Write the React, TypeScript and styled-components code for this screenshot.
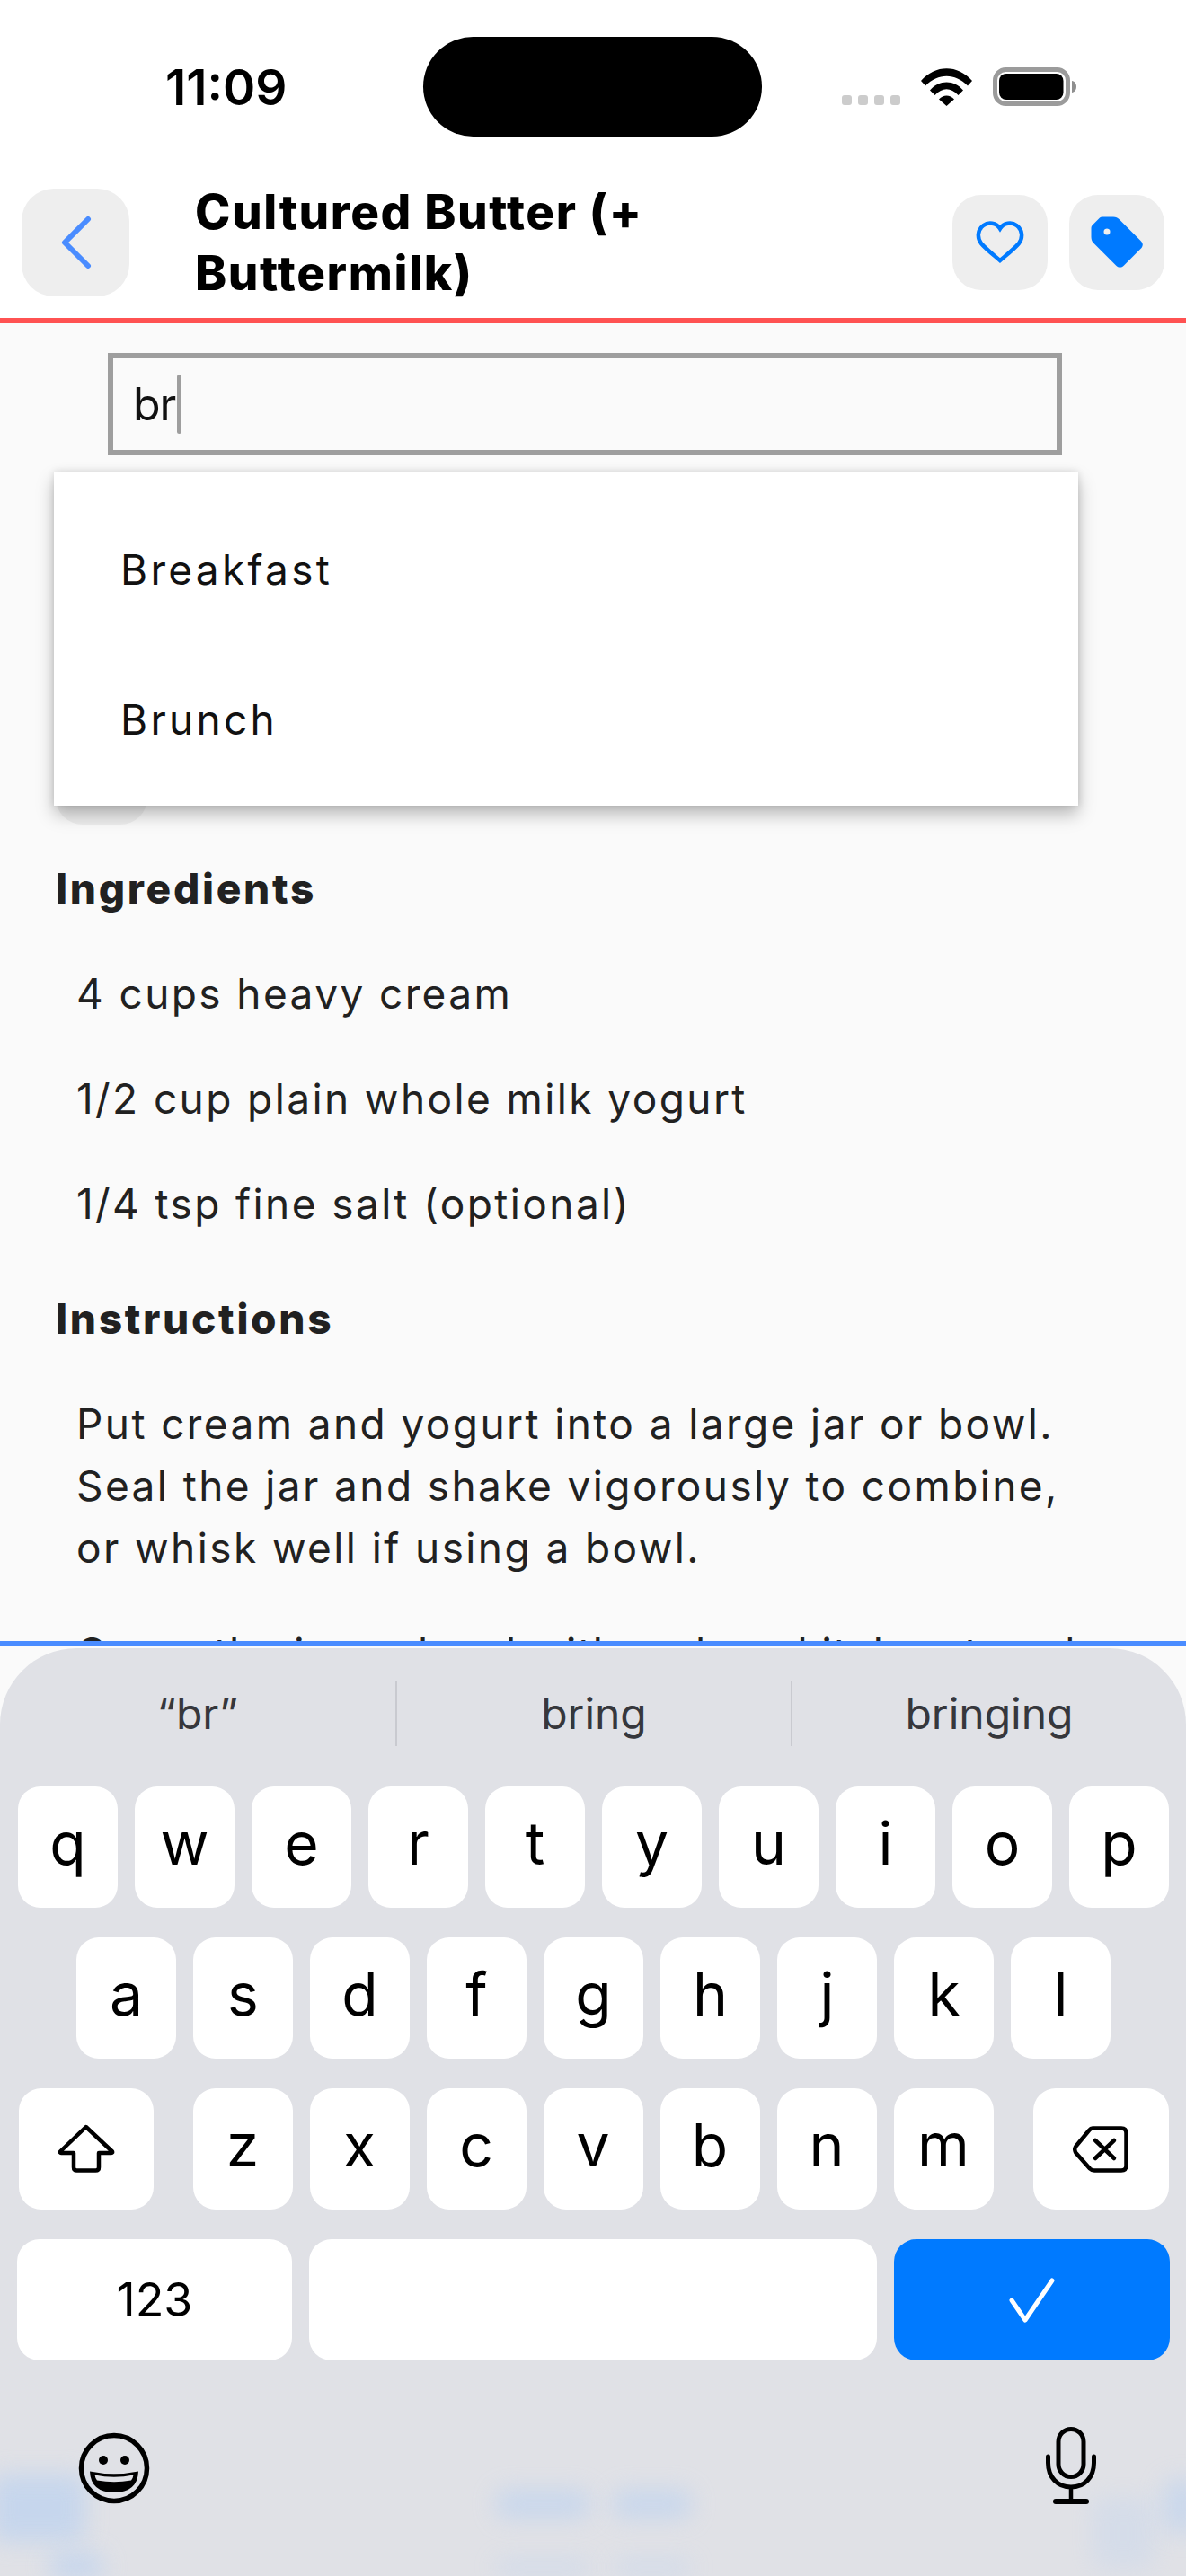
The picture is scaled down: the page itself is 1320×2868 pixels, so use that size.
import React from "react";
import styled, { createGlobalStyle } from "styled-components";

const GlobalStyle = createGlobalStyle`
  html, body {
    margin: 0;
    padding: 0;
    background: #fff;
  }
  * {
    box-sizing: border-box;
  }
`;

const Page = styled.div`
  width: 1320px;
  height: 2868px;
  display: flex;
  flex-direction: column;
  overflow: hidden;
  background: #fff;
  font-family: Inter, "Noto Sans", sans-serif;
`;

const StatusBar = styled.div`
  height: 186px;
  padding-top: 41px;
  display: grid;
  grid-template-columns: 471px 377px 1fr;
`;

const Time = styled.div`
  height: 111px;
  padding-left: 184px;
  display: flex;
  align-items: center;
  font-size: 55px;
  font-weight: 600;
  color: #000;
`;

const Island = styled.div`
  height: 111px;
  border-radius: 56px;
  background: #000;
`;

const StatusIcons = styled.div`
  height: 77px;
  padding-left: 89px;
  display: flex;
  align-items: flex-end;
  gap: 23px;
`;

const SignalDots = styled.div`
  display: flex;
  gap: 7px;
  padding-bottom: 1px;
`;

const SignalDot = styled.span`
  width: 11px;
  height: 11px;
  border-radius: 3px;
  background: #cccccc;
`;

const Header = styled.header`
  height: 174px;
  padding: 0 24px;
  display: flex;
  align-items: center;
  border-bottom: 6px solid #ff5252;
`;

const IconButton = styled.button<{ $size: number }>`
  width: ${(p) => p.$size}px;
  height: ${(p) => p.$size}px;
  flex: none;
  padding: 0;
  border: 0;
  border-radius: ${(p) => Math.round(p.$size * 0.3)}px;
  background: #eeeeee;
  display: flex;
  align-items: center;
  justify-content: center;
`;

const Title = styled.h1`
  flex: 1;
  margin: 0 0 0 73px;
  max-width: 560px;
  font-size: 53px;
  line-height: 68px;
  font-weight: 800;
  letter-spacing: 1.6px;
  color: #000;
`;

const HeaderActions = styled.div`
  margin-left: auto;
  display: flex;
  gap: 24px;
`;

const Content = styled.main`
  position: relative;
  flex: 1;
  min-height: 0;
  overflow: hidden;
  padding: 33px 62px 0;
  background: #fafafa;
  color: #212121;
  font-size: 46px;
  line-height: 69px;
  letter-spacing: 2.4px;
`;

const SearchField = styled.div`
  width: 1062px;
  height: 114px;
  margin-left: 58px;
  padding-left: 22px;
  display: flex;
  align-items: center;
  border: 6px solid #9e9e9e;
  font-size: 50px;
  letter-spacing: -1px;
  color: #111;
`;

const Caret = styled.span`
  width: 5px;
  height: 66px;
  margin-left: 2px;
  border-radius: 3px;
  background: #9e9e9e;
`;

const Chip = styled.div`
  width: 102px;
  height: 106px;
  margin-top: 305px;
  border-radius: 30px;
  background: #eeeeee;
`;

const SectionTitle = styled.h2<{ $gap: number }>`
  margin: ${(p) => p.$gap}px 0 48px;
  font-size: 46px;
  line-height: 69px;
  font-weight: 800;
  letter-spacing: 2.7px;
`;

const Step = styled.p<{ $clipped?: boolean }>`
  margin: 0 0 48px 23px;
  width: 1140px;
  height: ${(p) => (p.$clipped ? "60px" : "auto")};
  white-space: ${(p) => (p.$clipped ? "nowrap" : "normal")};
  letter-spacing: ${(p) => (p.$clipped ? "1.8px" : "inherit")};
`;

const Menu = styled.div`
  position: absolute;
  top: 165px;
  left: 60px;
  width: 1140px;
  height: 372px;
  padding-top: 26px;
  background: #fff;
  box-shadow: 0 10px 18px rgba(0, 0, 0, 0.26), 0 0 8px rgba(0, 0, 0, 0.12);
`;

const MenuItem = styled.div`
  height: 167px;
  padding-left: 74px;
  display: flex;
  align-items: center;
  color: #111;
  letter-spacing: 3.3px;
`;

const Keyboard = styled.section`
  position: relative;
  height: 1041px;
  flex: none;
  padding-top: 2px;
  border-top: 6px solid #4a8cff;
  background: #fafafa;
`;

const KeyboardPanel = styled.div`
  position: relative;
  height: 100%;
  padding-top: 37px;
  overflow: hidden;
  border-radius: 85px 85px 0 0;
  background: #e0e1e6;
`;

const Suggestions = styled.div`
  height: 117px;
  display: grid;
  grid-template-columns: repeat(3, 1fr);
  align-items: start;
`;

const Suggestion = styled.div<{ $divider?: boolean }>`
  height: 72px;
  padding-bottom: 2px;
  display: flex;
  align-items: center;
  justify-content: center;
  border-left: ${(p) => (p.$divider ? "2px solid #c9cad0" : "0")};
  font-size: 48px;
  color: #36373c;
`;

const KeyRow = styled.div`
  height: 135px;
  margin-bottom: 33px;
  padding: 0 19px 0 20px;
  display: flex;
  justify-content: center;
  gap: 19px;
`;

const Key = styled.div<{ $w?: number; $blue?: boolean; $small?: boolean; $icon?: boolean }>`
  width: ${(p) => p.$w ?? 111}px;
  height: 135px;
  flex: none;
  padding-bottom: ${(p) => (p.$small || p.$icon ? 0 : 9)}px;
  display: flex;
  align-items: center;
  justify-content: center;
  border-radius: 25px;
  background: ${(p) => (p.$blue ? "#007aff" : "#fff")};
  font-size: ${(p) => (p.$small ? 52 : 66)}px;
  color: #000;
`;

const ShiftGap = styled.div`
  width: 6px;
  flex: none;
`;

const BottomBar = styled.div`
  position: relative;
  z-index: 1;
  margin-top: 74px;
  padding: 0 100px 0 87px;
  display: flex;
  justify-content: space-between;
  align-items: flex-start;
`;

const EmojiWrap = styled.div`
  margin-top: 6px;
  display: flex;
`;

const Blur = styled.div<{ $x: number; $y: number; $w: number; $h: number; $o?: number }>`
  position: absolute;
  left: ${(p) => p.$x}px;
  top: ${(p) => p.$y - 1835}px;
  width: ${(p) => p.$w}px;
  height: ${(p) => p.$h}px;
  border-radius: 12px;
  background: #bcd2f0;
  opacity: ${(p) => p.$o ?? 0.8};
  filter: blur(13px);
`;

const Wifi = () => (
  <svg width="57" height="42" viewBox="0 0 57 42">
    <path d="M0 14 C16 -4.500 41 -4.500 57 14 L52 19.500 C38 5 19 5 5 19.500 Z" fill="#000" />
    <path d="M10 24.500 C20 12.500 37 12.500 47 24.500 L41.500 30 C33 21 24 21 15.500 30 Z" fill="#000" />
    <path d="M20 34.500 C25 29 32 29 37 34.500 L28.500 42 Z" fill="#000" />
  </svg>
);

const Battery = () => (
  <svg width="93" height="43" viewBox="0 0 93 43">
    <rect x="2.500" y="2.500" width="81" height="38" rx="12" fill="none" stroke="#9b9b9b" strokeWidth="5" />
    <rect x="7" y="7" width="71.500" height="29" rx="8" fill="#000" />
    <path d="M88 15 C91 15.500 93 18 93 21.500 C93 25 91 27.500 88 28 Z" fill="#8f8f8f" />
  </svg>
);

const Back = () => (
  <svg width="36" height="60" viewBox="0 0 36 60">
    <path d="M32 4 L6 30 L32 56" fill="none" stroke="#4a8cff" strokeWidth="6" strokeLinecap="round" strokeLinejoin="round" />
  </svg>
);

const Heart = () => (
  <svg width="54" height="48" viewBox="0 0 54 48">
    <path
      d="M27 8.500 C23 2 14 1 8.500 5 C1.500 10 1.500 19 6 25 C11 31 20 38 27 44 C34 38 43 31 48 25 C52.500 19 52.500 10 45.500 5 C40 1 31 2 27 8.500 Z"
      fill="none"
      stroke="#007aff"
      strokeWidth="4.500"
      strokeLinejoin="miter"
    />
  </svg>
);

const Tag = () => (
  <svg width="58" height="58" viewBox="0 0 58 58">
    <path
      d="M13 0.500 H25 C28 0.500 30 1.500 32 3.500 L55.500 27 C58.500 30 58.500 33 55.500 36 L37 54.500 C34 57.500 31 57.500 28 54.500 L3.500 30 C1.500 28 0.500 26 0.500 23 V13 C0.500 11.500 1 10.500 2 9.500 L9.500 2 C10.500 1 11.500 0.500 13 0.500 Z"
      fill="#007aff"
    />
    <circle cx="18" cy="17" r="3.500" fill="#eeeeee" />
  </svg>
);

const Shift = () => (
  <svg width="64" height="55" viewBox="64 57 64 55">
    <path
      d="M95.700 60 L125 87.500 Q125.500 89 124 89 H110 V105 Q110 108.500 106.500 108.500 H85.500 Q82 108.500 82 105 V89 H68 Q66.500 89 67 87.500 Z"
      fill="none"
      stroke="#000"
      strokeWidth="4.500"
      strokeLinejoin="round"
    />
  </svg>
);

const Delete = () => (
  <svg width="62" height="52" viewBox="0 0 62 52">
    <path
      d="M22 2.500 H54 Q59.500 2.500 59.500 8 V44 Q59.500 49.500 54 49.500 H24 Q21 49.500 19 47.500 L3.500 30 Q1 26 3.500 22.500 L18 5 Q20 2.500 22 2.500 Z"
      fill="none"
      stroke="#000"
      strokeWidth="4.500"
      strokeLinejoin="round"
    />
    <path d="M25 16 L46 36 M46 16 L25 36" stroke="#000" strokeWidth="4.500" strokeLinecap="round" />
  </svg>
);

const Check = () => (
  <svg width="52" height="50" viewBox="0 0 52 50">
    <path d="M3 25 L18 47 L48 3" fill="none" stroke="#fff" strokeWidth="5" strokeLinecap="round" strokeLinejoin="round" />
  </svg>
);

const Emoji = () => (
  <svg width="80" height="80" viewBox="0 0 80 80">
    <circle cx="40" cy="40" r="36.500" fill="none" stroke="#000" strokeWidth="5.500" />
    <circle cx="28" cy="31" r="5" fill="#000" />
    <circle cx="52" cy="31" r="5" fill="#000" />
    <path d="M13 43.500 Q40 49 67 43.500 Q66 67 40 67 Q14 67 13 43.500 Z" fill="#000" />
    <path d="M18.500 47.500 Q40 52 61.500 47.500 Q61 51 59 53.500 Q40 57 21 53.500 Q19 51 18.500 47.500 Z" fill="#e0e1e6" />
  </svg>
);

const Mic = () => (
  <svg width="56" height="86" viewBox="0 0 56 86">
    <rect x="14" y="2.500" width="28" height="53" rx="14" fill="none" stroke="#000" strokeWidth="5" />
    <path d="M2.500 33 V40 C2.500 56 13 67 28 67 C43 67 53.500 56 53.500 40 V33" fill="none" stroke="#000" strokeWidth="5" strokeLinecap="round" />
    <path d="M28 67 V81" stroke="#000" strokeWidth="4.500" />
    <rect x="8" y="80" width="40" height="6" rx="3" fill="#000" />
  </svg>
);

const row1 = ["q", "w", "e", "r", "t", "y", "u", "i", "o", "p"];
const row2 = ["a", "s", "d", "f", "g", "h", "j", "k", "l"];
const row3 = ["z", "x", "c", "v", "b", "n", "m"];

const App = () => {
  return (
    <>
      <GlobalStyle />
      <Page>
        <StatusBar>
          <Time>11:09</Time>
          <Island />
          <StatusIcons>
            <SignalDots>
              <SignalDot />
              <SignalDot />
              <SignalDot />
              <SignalDot />
            </SignalDots>
            <Wifi />
            <Battery />
          </StatusIcons>
        </StatusBar>

        <Header>
          <IconButton $size={120}>
            <Back />
          </IconButton>
          <Title>Cultured Butter (+ Buttermilk)</Title>
          <HeaderActions>
            <IconButton $size={106}>
              <Heart />
            </IconButton>
            <IconButton $size={106}>
              <Tag />
            </IconButton>
          </HeaderActions>
        </Header>

        <Content>
          <SearchField>
            br
            <Caret />
          </SearchField>
          <Chip />
          <SectionTitle $gap={37}>Ingredients</SectionTitle>
          <Step>4 cups heavy cream</Step>
          <Step>1/2 cup plain whole milk yogurt</Step>
          <Step>1/4 tsp fine salt (optional)</Step>
          <SectionTitle $gap={59}>Instructions</SectionTitle>
          <Step>
            Put cream and yogurt into a large jar or bowl. Seal the jar and shake vigorously to combine, or whisk well
            if using a bowl.
          </Step>
          <Step $clipped>Cover the jar or bowl with a clean kitchen towel</Step>

          <Menu>
            <MenuItem>Breakfast</MenuItem>
            <MenuItem>Brunch</MenuItem>
          </Menu>
        </Content>

        <Keyboard>
          <KeyboardPanel>
            <Blur $x={-10} $y={2755} $w={105} $h={75} $o={0.7} />
            <Blur $x={55} $y={2842} $w={60} $h={30} $o={0.7} />
            <Blur $x={552} $y={2772} $w={105} $h={32} $o={0.65} />
            <Blur $x={682} $y={2772} $w={88} $h={32} $o={0.65} />
            <Blur $x={552} $y={2852} $w={105} $h={12} $o={0.6} />
            <Blur $x={682} $y={2852} $w={88} $h={12} $o={0.6} />
            <Blur $x={1215} $y={2780} $w={70} $h={80} $o={0.3} />
            <Blur $x={1295} $y={2760} $w={40} $h={60} $o={0.6} />

            <Suggestions>
              <Suggestion>“br”</Suggestion>
              <Suggestion $divider>bring</Suggestion>
              <Suggestion $divider>bringing</Suggestion>
            </Suggestions>

            <KeyRow>
              {row1.map((k) => (
                <Key key={k}>{k}</Key>
              ))}
            </KeyRow>
            <KeyRow>
              {row2.map((k) => (
                <Key key={k}>{k}</Key>
              ))}
            </KeyRow>
            <KeyRow>
              <Key $w={150} $icon>
                <Shift />
              </Key>
              <ShiftGap />
              {row3.map((k) => (
                <Key key={k}>{k}</Key>
              ))}
              <ShiftGap />
              <Key $w={151} $icon>
                <Delete />
              </Key>
            </KeyRow>
            <KeyRow>
              <Key $w={306} $small>
                123
              </Key>
              <Key $w={632} />
              <Key $w={307} $blue $icon>
                <Check />
              </Key>
            </KeyRow>

            <BottomBar>
              <EmojiWrap>
                <Emoji />
              </EmojiWrap>
              <Mic />
            </BottomBar>
          </KeyboardPanel>
        </Keyboard>
      </Page>
    </>
  );
};

export default App;
